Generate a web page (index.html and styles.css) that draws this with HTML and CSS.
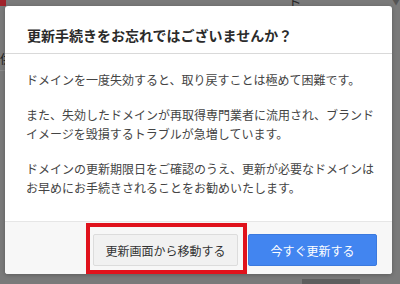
FILE: index.html
```html
<html>
  <head>
    <title>更新手続き</title>
    <link rel="stylesheet" href="styles.css">
  </head>
  <body>
    <!-- page behind the overlay -->
    <div class="page">
      <div class="page-top">
        <span class="brand-mark"></span>
        <span class="support-link">お客様サポート</span>
        <span class="support-caret">▼</span>
      </div>
      <div class="page-side">供</div>
      <div class="page-bottom"><span class="page-tab"></span></div>
    </div>

    <section class="modal">
      <header class="modal-header">
        <h1>更新手続きをお忘れではございませんか？</h1>
      </header>

      <div class="modal-body">
        <p>ドメインを一度失効すると、取り戻すことは極めて困難です。</p>
        <p>また、失効したドメインが再取得専門業者に流用され、ブランドイメージを毀損するトラブルが急増しています。</p>
        <p>ドメインの更新期限日をご確認のうえ、更新が必要なドメインはお早めにお手続きされることをお勧めいたします。</p>
      </div>

      <footer class="modal-footer">
        <span class="marked">
          <button class="btn btn-plain">更新画面から移動する</button>
        </span>
        <button class="btn btn-primary">今すぐ更新する</button>
      </footer>
    </section>
  </body>
</html>
```

FILE: styles.css
```css
body {
  margin: 0;
  width: 400px;
  height: 284px;
  overflow: hidden;
  background-color: #7a7a7a;
  font-family: "Noto Sans CJK JP", "Noto Sans", sans-serif;
  color: #333;
}

.page {
  height: 284px;
  display: flex;
  flex-direction: column;

  .page-top {
    height: 6px;
    display: flex;
    align-items: flex-end;
    overflow: hidden;

    .brand-mark {
      width: 6px;
      height: 6px;
      background-color: #a0222a;
    }

    .support-link {
      margin-left: 282px;
      font-size: 14px;
      line-height: 14px;
      color: #2a2a2a;
      margin-bottom: -2px;
    }

    .support-caret {
      margin-left: 14px;
      font-size: 8px;
      color: #555;
      margin-bottom: -1px;
    }
  }

  .page-side {
    margin-top: 46px;
    width: 5px;
    overflow: hidden;
    font-size: 12px;
    line-height: 14px;
    color: #222;
    border-bottom: 1px solid #8a8a8a;
    padding-bottom: 4px;
  }

  .page-bottom {
    margin-top: auto;
    height: 5px;

    .page-tab {
      display: block;
      margin-left: 302px;
      width: 58px;
      height: 5px;
      background-color: #5e5e5e;
    }
  }
}

.modal {
  position: absolute;
  left: 5px;
  top: 6px;
  width: 387px;
  height: 268px;
  background-color: #fff;
  border-radius: 3px;
  box-shadow: 0 1px 4px rgba(0, 0, 0, 0.25);
  display: flex;
  flex-direction: column;
  overflow: hidden;

  .modal-header {
    padding: 19px 22px 8px;
    border-bottom: 1px solid #d9d9d9;

    h1 {
      margin: 0;
      font-size: 14px;
      line-height: 20px;
      font-weight: bold;
      color: #2b2b2b;
    }
  }

  .modal-body {
    flex: auto;
    padding: 16px 14px 0 21px;
    font-size: 12px;
    line-height: 19.5px;
    color: #444;

    p {
      margin: 0 0 15px;
    }
  }

  .modal-footer {
    height: 53px;
    box-sizing: border-box;
    padding: 12px 15px 0;
    background-color: #f7f7f7;
    border-top: 1px solid #e6e6e6;
    display: flex;
    justify-content: flex-end;
    align-items: flex-start;
    gap: 10px;
  }
}

.btn {
  height: 32px;
  font-family: inherit;
  font-size: 12px;
  border-radius: 2px;
  cursor: pointer;
}

.btn-plain {
  width: 145px;
  background-color: #f1f1f1;
  border: 1px solid #dcdcdc;
  color: #333;
}

.btn-primary {
  width: 129px;
  background-color: #4285f0;
  border: 1px solid #3b79de;
  color: #fff;
}

/* red annotation round the secondary button */
.marked {
  position: relative;
  display: flex;
}

.marked::after {
  content: "";
  position: absolute;
  left: -7px;
  right: -9px;
  top: -11px;
  bottom: -8px;
  border: 4px solid #e0121c;
}
```
